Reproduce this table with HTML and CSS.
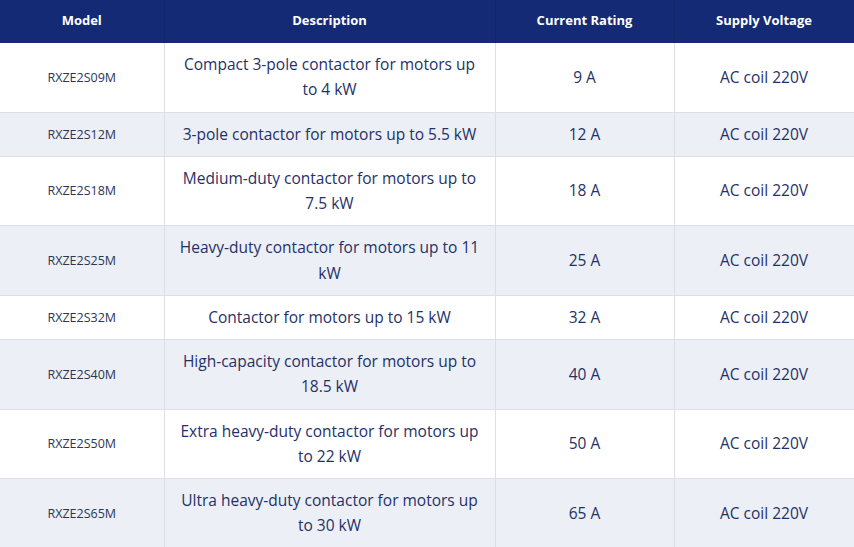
FILE: index.html
```html
<!DOCTYPE html>
<html>
<head>
<meta charset="utf-8">
<link rel="stylesheet" href="styles.css">
</head>
<body>
<table class="spec">
  <colgroup>
    <col class="c-model">
    <col class="c-desc">
    <col class="c-rating">
    <col class="c-volt">
  </colgroup>
  <thead>
    <tr><th>Model</th><th>Description</th><th>Current Rating</th><th>Supply Voltage</th></tr>
  </thead>
  <tbody>
    <tr><td class="model">RXZE2S09M</td><td>Compact 3-pole contactor for motors up to 4 kW</td><td>9 A</td><td>AC coil 220V</td></tr>
    <tr><td class="model">RXZE2S12M</td><td>3-pole contactor for motors up to 5.5 kW</td><td>12 A</td><td>AC coil 220V</td></tr>
    <tr><td class="model">RXZE2S18M</td><td>Medium-duty contactor for motors up to 7.5 kW</td><td>18 A</td><td>AC coil 220V</td></tr>
    <tr><td class="model">RXZE2S25M</td><td>Heavy-duty contactor for motors up to 11 kW</td><td>25 A</td><td>AC coil 220V</td></tr>
    <tr><td class="model">RXZE2S32M</td><td>Contactor for motors up to 15 kW</td><td>32 A</td><td>AC coil 220V</td></tr>
    <tr><td class="model">RXZE2S40M</td><td>High-capacity contactor for motors up to 18.5 kW</td><td>40 A</td><td>AC coil 220V</td></tr>
    <tr><td class="model">RXZE2S50M</td><td>Extra heavy-duty contactor for motors up to 22 kW</td><td>50 A</td><td>AC coil 220V</td></tr>
    <tr><td class="model">RXZE2S65M</td><td>Ultra heavy-duty contactor for motors up to 30 kW</td><td>65 A</td><td>AC coil 220V</td></tr>
  </tbody>
</table>
</body>
</html>
```
FILE: styles.css
```css
html, body {
  margin: 0;
  padding: 0;
  background: #ffffff;
}
body {
  font-family: "Open Sans", "Noto Sans", sans-serif;
  color: #1f3168;
}
.spec {
  width: 854px;
  border-collapse: collapse;
  table-layout: fixed;
  border-right: 1px solid #dfe2e8;
}
.c-model { width: 164px; }
.c-desc { width: 331px; }
.c-rating { width: 179px; }
.c-volt { width: 180px; }
.spec th {
  background: #152a74;
  color: #ffffff;
  font-weight: 700;
  font-size: 13px;
  line-height: 20px;
  padding: 10px 8px 13px;
  text-align: center;
  border-right: 1px solid #12256a;
}
.spec td {
  font-size: 15.5px;
  line-height: 25.25px;
  padding: 9px 12px;
  text-align: center;
  vertical-align: middle;
  border-right: 1px solid #dcdfe6;
  border-bottom: 1px solid #dcdfe6;
}
.spec td.model {
  font-size: 12.5px;
  color: #2b3557;
}
.spec tbody tr:nth-child(even) td {
  background: #eceff5;
}
```
